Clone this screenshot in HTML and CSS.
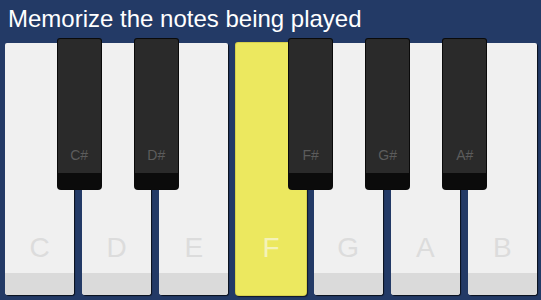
FILE: index.html
```html
<!DOCTYPE html>
<html>
<head>
<meta charset="utf-8">
<link rel="stylesheet" href="styles.css">
</head>
<body>
<div class="screen">
  <h1 class="title">Memorize the notes being played</h1>
  <div class="keyboard">
    <div class="wkey"><span class="wlabel">C</span><div class="band"></div>
      <div class="bkey"><div class="bface"><span class="blabel">C#</span></div><div class="bband"></div></div>
    </div>
    <div class="wkey"><span class="wlabel">D</span><div class="band"></div>
      <div class="bkey"><div class="bface"><span class="blabel">D#</span></div><div class="bband"></div></div>
    </div>
    <div class="wkey"><span class="wlabel">E</span><div class="band"></div></div>
    <div class="wkey active"><span class="wlabel">F</span><div class="band"></div>
      <div class="bkey"><div class="bface"><span class="blabel">F#</span></div><div class="bband"></div></div>
    </div>
    <div class="wkey"><span class="wlabel">G</span><div class="band"></div>
      <div class="bkey"><div class="bface"><span class="blabel">G#</span></div><div class="bband"></div></div>
    </div>
    <div class="wkey"><span class="wlabel">A</span><div class="band"></div>
      <div class="bkey"><div class="bface"><span class="blabel">A#</span></div><div class="bband"></div></div>
    </div>
    <div class="wkey"><span class="wlabel">B</span><div class="band"></div></div>
  </div>
</div>
</body>
</html>
```
FILE: styles.css
```css
html, body {
  margin: 0;
  padding: 0;
}
body {
  width: 541px;
  height: 300px;
  overflow: hidden;
  background: #233a66;
  font-family: "Liberation Sans", Arial, sans-serif;
}
.screen {
  display: flex;
  flex-direction: column;
  height: 300px;
}
.title {
  margin: 0;
  padding: 5px 8px 0;
  font-size: 24px;
  line-height: 28px;
  font-weight: normal;
  color: #ffffff;
}
.keyboard {
  display: flex;
  gap: 8px;
  margin: 10px 4px 0 5px;
  height: 252px;
}
.wkey {
  position: relative;
  flex: 1;
  display: flex;
  flex-direction: column;
  justify-content: flex-end;
  align-items: center;
  background: #f0f0f0;
  border-radius: 2px 2px 3px 3px;
  box-shadow: 1px 1px 1px rgba(0, 0, 0, 0.75);
}
.wlabel {
  font-size: 28px;
  line-height: 28px;
  color: #dcdcdc;
  margin-bottom: 11px;
}
.band {
  align-self: stretch;
  height: 22px;
  background: #dadada;
  border-radius: 0 0 3px 3px;
}
.wkey.active {
  background: #ece85f;
  box-shadow: 0 0 0 1px #d6d04c, 1px 1px 1px 1px rgba(0, 0, 0, 0.6);
}
.wkey.active .band {
  background: #ece85f;
}
.wkey.active .wlabel {
  color: #f4f2b8;
}
.bkey {
  position: absolute;
  z-index: 1;
  top: -4px;
  right: -26.5px;
  width: 43px;
  height: 150px;
  display: flex;
  flex-direction: column;
  background: #0b0b0b;
  border-radius: 2px 2px 3px 3px;
  box-shadow: 0 0 0 1px #0a0a0a;
}
.bface {
  flex: 1;
  display: flex;
  align-items: flex-end;
  justify-content: center;
  background: #2a2a2a;
  border-radius: 2px 2px 0 0;
}
.blabel {
  font-size: 14px;
  line-height: 14px;
  color: #5c5c5c;
  margin-bottom: 11px;
}
.bband {
  height: 16px;
}
```
